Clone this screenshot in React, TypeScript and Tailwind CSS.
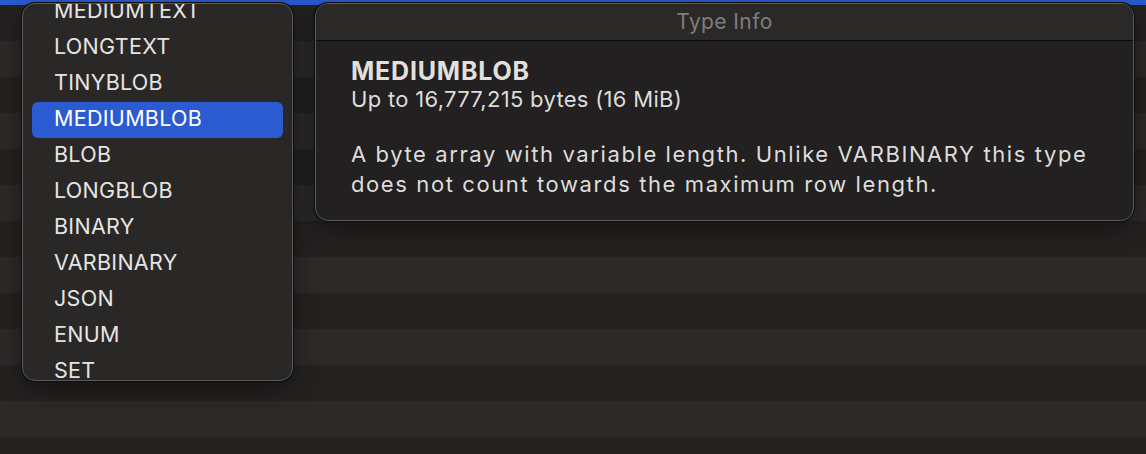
const types = [
  'MEDIUMTEXT',
  'LONGTEXT',
  'TINYBLOB',
  'MEDIUMBLOB',
  'BLOB',
  'LONGBLOB',
  'BINARY',
  'VARBINARY',
  'JSON',
  'ENUM',
  'SET',
]

const selected = 'MEDIUMBLOB'

export default function App() {
  const rows = Array.from({ length: 13 }, (_, i) => i)

  return (
    <div
      className="relative h-[454px] w-[1146px] overflow-hidden bg-[#242221]"
      style={{ fontFamily: 'Inter, "Noto Sans", sans-serif' }}
    >
      {/* Table rows behind the popovers */}
      <div className="flex flex-col">
        <div className="h-[5px] bg-[#2c5bd0]" />
        {rows.map((i) => (
          <div
            key={i}
            className={i % 2 === 0 ? 'h-[36px] bg-[#242221]' : 'h-[36px] bg-[#2c2a29]'}
          />
        ))}
      </div>

      {/* Type dropdown */}
      <div className="absolute left-[22px] top-[3px] h-[378px] w-[271px] overflow-hidden rounded-[13px] border border-[#5d5b5a] bg-[#2a2827] shadow-[0_0_0_1px_#0e0d0d,0_8px_24px_rgba(0,0,0,0.45)]">
        <ul className="-mt-[10px] flex flex-col px-[9px]">
          {types.map((t) => (
            <li
              key={t}
              className={
                t === selected
                  ? 'flex h-[36px] items-center rounded-[6px] bg-[#2b5ad1] pb-[3px] pl-[22px] text-[21.5px] tracking-[0.3px] text-white'
                  : 'flex h-[36px] items-center pb-[3px] pl-[22px] text-[21.5px] tracking-[0.3px] text-[#e6e4e2]'
              }
            >
              {t}
            </li>
          ))}
        </ul>
      </div>

      {/* Type info panel */}
      <div className="absolute left-[315px] top-[3px] w-[819px] overflow-hidden rounded-[13px] border border-[#5d5b5a] bg-[#222020] shadow-[0_0_0_1px_#0e0d0d,0_8px_24px_rgba(0,0,0,0.45)]">
        <div className="flex h-[37px] items-center justify-center border-b border-[#0b0a0a] bg-[#2b2928] text-[21px] tracking-[0.4px] text-[#7f7d7c]">
          Type Info
        </div>
        <div className="pb-[21px] pl-[35px] pr-[30px] pt-[15px]">
          <div className="text-[25px] font-bold leading-[30px] tracking-[0.8px] text-[#e2e0de]">MEDIUMBLOB</div>
          <div className="text-[22px] leading-[27px] tracking-[0.3px] text-[#dedcda]">Up to 16,777,215 bytes (16 MiB)</div>
          <p className="mt-[26px] text-[22px] leading-[30px] tracking-[1.6px] text-[#dedcda]">
            A byte array with variable length. Unlike VARBINARY this type does not count towards the
            maximum row length.
          </p>
        </div>
      </div>
    </div>
  )
}
